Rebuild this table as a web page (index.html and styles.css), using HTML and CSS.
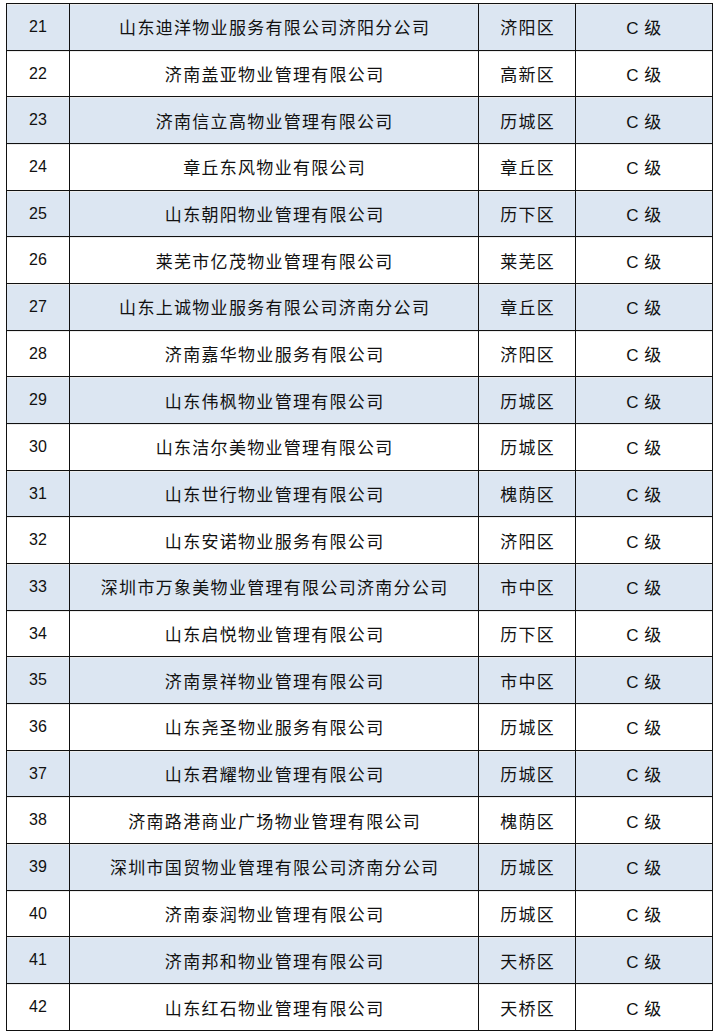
FILE: index.html
```html
<!DOCTYPE html>
<html lang="zh-CN">
<head>
<meta charset="utf-8">
<title>物业企业信用等级</title>
<link rel="stylesheet" href="styles.css">
</head>
<body>
<table class="grade-table">
<colgroup>
<col class="c-no"><col class="c-name"><col class="c-area"><col class="c-grade">
</colgroup>
<tbody>
<tr class="alt"><td class="no">21</td><td class="cn">山东迪洋物业服务有限公司济阳分公司</td><td class="cn">济阳区</td><td class="grade">C <span>级</span></td></tr>
<tr><td class="no">22</td><td class="cn">济南盖亚物业管理有限公司</td><td class="cn">高新区</td><td class="grade">C <span>级</span></td></tr>
<tr class="alt"><td class="no">23</td><td class="cn">济南信立高物业管理有限公司</td><td class="cn">历城区</td><td class="grade">C <span>级</span></td></tr>
<tr><td class="no">24</td><td class="cn">章丘东风物业有限公司</td><td class="cn">章丘区</td><td class="grade">C <span>级</span></td></tr>
<tr class="alt"><td class="no">25</td><td class="cn">山东朝阳物业管理有限公司</td><td class="cn">历下区</td><td class="grade">C <span>级</span></td></tr>
<tr><td class="no">26</td><td class="cn">莱芜市亿茂物业管理有限公司</td><td class="cn">莱芜区</td><td class="grade">C <span>级</span></td></tr>
<tr class="alt"><td class="no">27</td><td class="cn">山东上诚物业服务有限公司济南分公司</td><td class="cn">章丘区</td><td class="grade">C <span>级</span></td></tr>
<tr><td class="no">28</td><td class="cn">济南嘉华物业服务有限公司</td><td class="cn">济阳区</td><td class="grade">C <span>级</span></td></tr>
<tr class="alt"><td class="no">29</td><td class="cn">山东伟枫物业管理有限公司</td><td class="cn">历城区</td><td class="grade">C <span>级</span></td></tr>
<tr><td class="no">30</td><td class="cn">山东洁尔美物业管理有限公司</td><td class="cn">历城区</td><td class="grade">C <span>级</span></td></tr>
<tr class="alt"><td class="no">31</td><td class="cn">山东世行物业管理有限公司</td><td class="cn">槐荫区</td><td class="grade">C <span>级</span></td></tr>
<tr><td class="no">32</td><td class="cn">山东安诺物业服务有限公司</td><td class="cn">济阳区</td><td class="grade">C <span>级</span></td></tr>
<tr class="alt"><td class="no">33</td><td class="cn">深圳市万象美物业管理有限公司济南分公司</td><td class="cn">市中区</td><td class="grade">C <span>级</span></td></tr>
<tr><td class="no">34</td><td class="cn">山东启悦物业管理有限公司</td><td class="cn">历下区</td><td class="grade">C <span>级</span></td></tr>
<tr class="alt"><td class="no">35</td><td class="cn">济南景祥物业管理有限公司</td><td class="cn">市中区</td><td class="grade">C <span>级</span></td></tr>
<tr><td class="no">36</td><td class="cn">山东尧圣物业服务有限公司</td><td class="cn">历城区</td><td class="grade">C <span>级</span></td></tr>
<tr class="alt"><td class="no">37</td><td class="cn">山东君耀物业管理有限公司</td><td class="cn">历城区</td><td class="grade">C <span>级</span></td></tr>
<tr><td class="no">38</td><td class="cn">济南路港商业广场物业管理有限公司</td><td class="cn">槐荫区</td><td class="grade">C <span>级</span></td></tr>
<tr class="alt"><td class="no">39</td><td class="cn">深圳市国贸物业管理有限公司济南分公司</td><td class="cn">历城区</td><td class="grade">C <span>级</span></td></tr>
<tr><td class="no">40</td><td class="cn">济南泰润物业管理有限公司</td><td class="cn">历城区</td><td class="grade">C <span>级</span></td></tr>
<tr class="alt"><td class="no">41</td><td class="cn">济南邦和物业管理有限公司</td><td class="cn">天桥区</td><td class="grade">C <span>级</span></td></tr>
<tr><td class="no">42</td><td class="cn">山东红石物业管理有限公司</td><td class="cn">天桥区</td><td class="grade">C <span>级</span></td></tr>
</tbody>
</table>
</body>
</html>
```

FILE: styles.css
```css
html, body {
  margin: 0;
  padding: 0;
  background: #ffffff;
}

body {
  padding: 3px 0 0 6px;
  font-family: "Liberation Sans", "Noto Sans CJK SC", sans-serif;
  color: #111111;
}

.grade-table {
  border-collapse: collapse;
  table-layout: fixed;
  width: 706px;
  height: 1028px;
}

.c-no { width: 63px; }
.c-name { width: 409px; }
.c-area { width: 97px; }
.c-grade { width: 137px; }

.grade-table td {
  border: 1px solid #111111;
  padding: 0;
  text-align: center;
  vertical-align: middle;
  white-space: nowrap;
  box-shadow: inset 0 1px 0 #ececec;
}

.grade-table tr.alt td {
  background: #dce6f2;
}

.no {
  font-size: 16px;
}

.cn {
  font-family: "Noto Sans CJK SC", sans-serif;
  font-size: 17px;
  letter-spacing: 1.3px;
  text-indent: 1.3px;
}

.grade {
  font-size: 17px;
  letter-spacing: 0.5px;
}

.grade span {
  font-family: "Noto Sans CJK SC", sans-serif;
}
```
